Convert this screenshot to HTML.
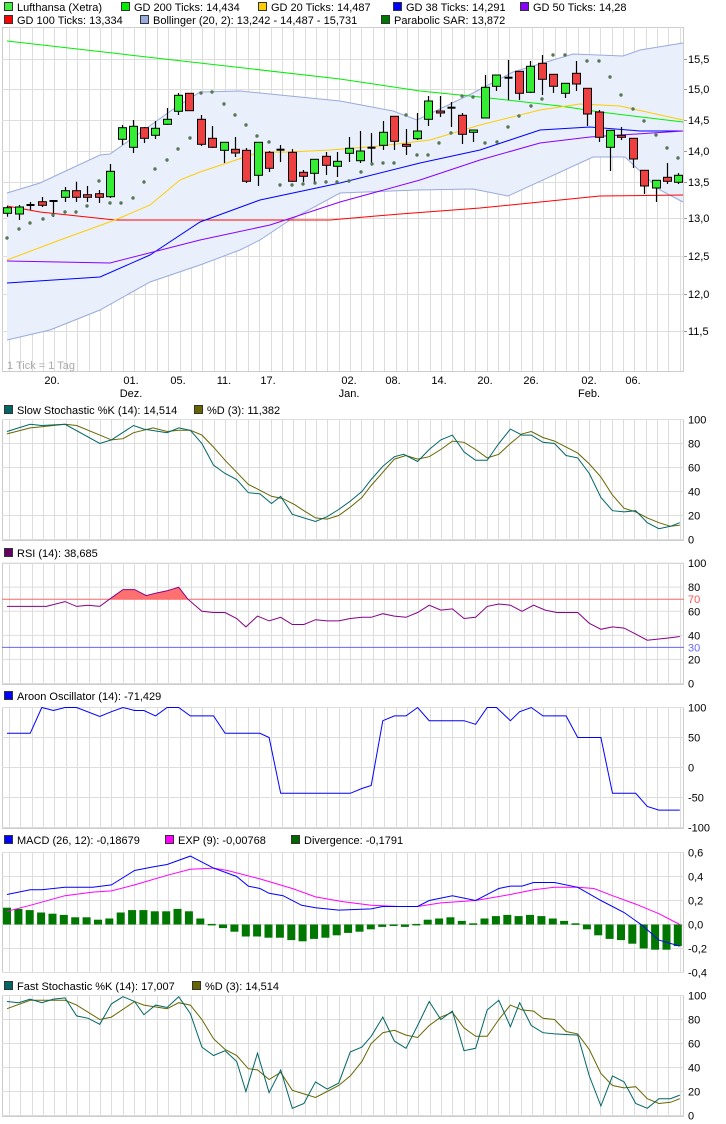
<!DOCTYPE html>
<html><head><meta charset="utf-8"><style>
body{margin:0;background:#fff;width:726px;height:1124px;overflow:hidden;font-family:"Liberation Sans",sans-serif}
svg{display:block}
text{font-family:"Liberation Sans",sans-serif;font-size:11px;fill:#000}
</style></head><body>
<svg id="s" width="726" height="1124" xmlns="http://www.w3.org/2000/svg"></svg>
<script>
var S=document.getElementById('s'),h='';
function L(x1,y1,x2,y2,c,w){h+='<line x1="'+x1+'" y1="'+y1+'" x2="'+x2+'" y2="'+y2+'" stroke="'+c+'" stroke-width="'+(w||1)+'"/>';}
function R(x,y,w,hh,f,s){h+='<rect x="'+x+'" y="'+y+'" width="'+w+'" height="'+hh+'" fill="'+f+'"'+(s?' stroke="'+s+'"':'')+'/>';}
function T(x,y,t,c,a){h+='<text x="'+x+'" y="'+y+'"'+(c?' style="fill:'+c+'"':'')+(a?' text-anchor="'+a+'"':'')+'>'+t+'</text>';}
function P(pts,c,w,fill){h+='<polyline points="'+pts.map(function(p){return p[0]+','+p[1]}).join(' ')+'" fill="'+(fill||'none')+'" stroke="'+c+'" stroke-width="'+(w||1)+'"/>';}
function leg(x,y,c,t){R(x+0.5,y-8.5,8,8,c,'#333');T(x+13,y,t);}
function frame(top,bot,hl){R(2.5,top+0.5,681,bot-top,'#fff','#ccc');
 for(var i=0;i<60;i++){var x=Math.round(9+11.37*i)+0.5;L(x,top,x,bot,'#ddd');}
 hl.forEach(function(y){L(2,y,684,y,'#ddd');});}
function Z(a,f){return a.map(function(p){return [(p[0]/2.155).toFixed(1),f(p[1]).toFixed(1)]});}
// legends
leg(4,11,'#44ee44','Lufthansa (Xetra)');leg(121,11,'#00ee00','GD 200 Ticks: 14,434');leg(258,11,'#ffcc00','GD 20 Ticks: 14,487');leg(393,11,'#0000ff','GD 38 Ticks: 14,291');leg(520,11,'#8800ff','GD 50 Ticks: 14,28');
leg(4,24,'#ff0000','GD 100 Ticks: 13,334');leg(140,24,'#99aadd','Bollinger (20, 2): 13,242 - 14,487 - 15,731');leg(381,24,'#007700','Parabolic SAR: 13,872');
// main
var gl=[59,89,120,151,182,218,256,294,331];
frame(27,371,gl.map(function(y){return y+0.5}));
var lab=['15,5','15,0','14,5','14,0','13,5','13,0','12,5','12,0','11,5'];
gl.forEach(function(y,i){T(688,y+4,lab[i]);L(684,y+.5,687,y+.5,'#999');});
var up=[[7,193],[40,183],[100,155],[110,154],[130,140],[172,110],[200,92],[240,91],[280,95],[340,101],[393,111],[417,120],[473,93],[513,72],[573,54],[623,56],[640,50],[683,43]];
var lo=[[683,202],[660,190],[625,157],[593,157],[508,196],[473,189],[417,190],[340,193],[290,220],[260,240],[240,250],[200,265],[150,282],[100,310],[50,330],[7,340]];
P(up.concat(lo),'none',1,'#e9f0fb');P(up,'#99aadd');P(lo,'#99aadd');
P([[7,41],[340,79],[420,91],[480,97],[560,106],[600,112],[683,122]],'#00ee00');
P([[7,206],[40,212],[115,220],[330,220],[400,214],[480,208],[560,200],[600,196],[683,195]],'#ff0000');
P([[7,283],[100,277],[150,255],[200,222],[260,200],[340,183],[420,163],[480,150],[540,130],[590,127],[640,131],[683,131]],'#0000ff');
P([[7,261],[110,263],[200,240],[270,225],[340,202],[420,180],[480,160],[540,143],[590,137],[683,131]],'#8800ff');
P([[7,260],[60,240],[115,220],[150,205],[180,180],[200,172],[230,162],[260,152],[290,152],[330,150],[380,146],[430,140],[480,125],[540,110],[580,104],[620,106],[683,120]],'#ffcc00');
var C=[[7,207.7,213.3,205.7,216.7,'g'],[19,207,214,205,220,'g'],[30,205,205,202,210,'d'],[42,201.7,205.3,197,207,'r'],[53,201,201,200,217,'d'],[65,190.7,197.3,187,202,'g'],[76,190.7,197.3,181.7,202,'r'],[87,194.7,197.3,186,202,'r'],[99,193.7,197.3,190,203,'r'],[110,171.3,196.7,164,198,'g'],[122,127.7,139.3,125,145,'g'],[133,126.3,147.3,120,153,'g'],[144,127.7,138.3,127,143,'r'],[155,128.3,135.3,121,139,'g'],[167,119.3,124.3,108,125,'g'],[178,95.3,111.3,93,115,'g'],[189,93.3,110.7,93,111,'r'],[201,119.3,144.3,115,146,'r'],[212,138.3,147.3,126,148,'r'],[224,142.3,150.3,142,163,'g'],[235,149.3,153,137,157,'r'],[246,150.3,181.3,148,183,'r'],[258,142.3,175.3,142,186,'g'],[269,152.3,168.3,151,172,'r'],[280,149.7,149.7,145,162,'d'],[292,152.3,181.3,149,182,'r'],[303,172.3,176.3,170,182,'r'],[314,159.3,173.3,159,182,'g'],[326,156.3,165.3,152,175,'r'],[337,161.3,166.3,152,177,'g'],[349,148.3,153.3,137,162,'g'],[360,151,160.7,131,163,'g'],[371,147.7,147.7,133,164,'d'],[383,132.3,145.3,121,150,'g'],[394,116.3,141.3,116,150,'r'],[406,144.3,146.3,129,155,'r'],[417,131,138.7,113,140,'g'],[428,101,119.3,96,126,'g'],[440,111,113,96,117,'r'],[451,107.7,107.7,102,127,'d'],[462,115.3,134.3,113,144,'r'],[473,130,132.3,130,142,'g'],[485,87.3,118,75,118,'g'],[496,75,86.3,75,91,'g'],[508,77.7,77.7,60,100,'d'],[519,71.3,93.3,71,100,'r'],[530,66.3,92.3,61,93,'g'],[542,63.3,79.3,55,95,'r'],[553,74.3,86.3,74,93,'r'],[565,83.3,93.3,83,98,'g'],[576,73.3,84,61,91,'r'],[587,88.3,114,88,126,'r'],[599,112,137.3,110,142,'r'],[610,130.3,147.3,130,171,'g'],[621,135.3,137.3,127,140,'r'],[633,138.3,159,138,168,'r'],[644,170.3,186,170,194,'r'],[656,180.3,188,180,202,'g'],[667,177.3,181.3,163,184,'r'],[678,175.3,182.3,173,184,'g']];
C.forEach(function(c){var x=c[0]+0.5;L(x,c[3],x,c[4],'#000',1.2);
 if(c[5]=='d'){L(x-4,c[1],x+4,c[1],'#000',2);}
 else R(c[0]-3.5,c[1],8,Math.max(c[2]-c[1],1.5),c[5]=='g'?'#33ee33':'#ee4040','#000');});
var sar=[[7,238],[19,229],[30,223],[43,219],[53,215],[65,212],[76,212],[87,206],[99,181],[110,203],[121,203],[133,198],[144,182],[155,169],[167,160],[178,149],[190,138],[201,93],[212,92],[224,104],[235,115],[246,125],[257,136],[269,142],[280,185],[292,185],[303,184],[315,183],[326,182],[337,182],[349,181],[361,172],[372,164],[383,163],[394,163],[406,115],[417,155],[428,155],[439,143],[451,133],[462,96],[473,97],[485,143],[497,142],[508,127],[519,116],[531,106],[542,99],[553,55],[565,55],[587,61],[599,61],[610,77],[621,95],[633,109],[644,121],[656,135],[667,148],[678,158]];
sar.forEach(function(p){h+='<circle cx="'+p[0]+'" cy="'+p[1]+'" r="1.7" fill="#557755"/>';});
T(7,369,'1 Tick = 1 Tag','#aaa');
[[52,'20.'],[131,'01.','Dez.'],[178,'05.'],[224,'11.'],[268,'17.'],[349,'02.','Jan.'],[393,'08.'],[439,'14.'],[485,'20.'],[531,'26.'],[589,'02.','Feb.'],[633,'06.']].forEach(function(a){T(a[0],384,a[1],null,'middle');if(a[2])T(a[0],397,a[2],null,'middle');});
// slow stoch
leg(4,414,'#006666','Slow Stochastic %K (14): 14,514');leg(194,414,'#666600','%D (3): 11,382');
var y2=function(v){return 539.5-v*1.2};
frame(419,540,[0,20,40,60,80,100].map(function(v){return y2(v)}));
[0,20,40,60,80,100].forEach(function(v){T(688,y2(v)+4,''+v);});
var sk=[[15,90],[65,96],[90,95],[140,96],[215,80],[240,83],[288,95],[310,92],[360,89],[385,93],[410,91],[435,80],[460,62],[485,55],[510,50],[535,39],[560,38],[585,30],[605,36],[630,21],[680,15],[705,19],[730,25],[755,32],[780,40],[800,50],[825,61],[850,69],[870,71],[900,65],[925,75],[950,83],[975,87],[1000,73],[1025,66],[1050,66],[1075,80],[1100,92],[1125,87],[1145,87],[1170,81],[1195,80],[1220,70],[1245,68],[1270,55],[1295,35],[1320,24],[1345,23],[1370,24],[1395,14],[1420,9],[1445,11],[1465,14]];
var sd=[[15,88],[65,93],[90,94],[140,96],[165,95],[215,87],[240,83],[265,84],[288,89],[330,93],[360,90],[385,91],[410,91],[435,87],[460,77],[485,66],[510,56],[535,46],[560,41],[585,36],[610,34],[635,29],[655,24],[680,18],[705,17],[730,20],[755,27],[780,35],[800,45],[825,56],[850,67],[875,70],[900,67],[925,69],[950,75],[975,82],[1000,81],[1025,75],[1050,68],[1075,71],[1100,80],[1125,88],[1145,90],[1170,85],[1195,82],[1220,77],[1245,72],[1270,63],[1295,52],[1320,37],[1345,26],[1370,23],[1395,18],[1420,14],[1445,11],[1465,12]];
P(Z(sd,y2),'#666600');P(Z(sk,y2),'#006666');
// RSI
leg(4,557,'#660066','RSI (14): 38,685');
var y3=function(v){return 683.5-v*1.204};
frame(563,684,[0,20,40,60,80,100].map(function(v){return y3(v)}));
[0,20,40,60,80,100].forEach(function(v){T(688,y3(v)+4,''+v);});
T(688,y3(70)+4,'70','#ff5555');T(688,y3(30)+4,'30','#6666ff');
var rs=[[15,64],[100,64],[140,68],[165,64],[190,65],[215,64],[236,70],[265,78],[290,78],[315,73],[335,75],[360,77],[385,80],[405,70],[435,60],[460,59],[485,59],[510,54],[530,47],[555,56],[580,52],[605,55],[630,49],[655,49],[680,53],[705,52],[730,52],[755,54],[780,55],[800,55],[825,58],[850,56],[875,55],[900,59],[925,65],[950,61],[975,62],[1000,54],[1025,55],[1050,64],[1075,66],[1100,65],[1125,60],[1150,65],[1175,61],[1200,59],[1245,59],[1270,50],[1295,45],[1320,47],[1345,46],[1370,41],[1395,36],[1420,37],[1445,38],[1465,39]];
P(Z([[236,70],[265,78],[290,78],[315,73],[335,75],[360,77],[385,80],[405,70]],y3),'none',1,'#ff7070');
L(2,y3(70),684,y3(70),'#ff6666');L(2,y3(30),684,y3(30),'#6666ff');
P(Z(rs,y3),'#880088');
// Aroon
leg(4,700,'#0000ff','Aroon Oscillator (14): -71,429');
var y4=function(v){return 767.5-v*0.6};
frame(707,828,[-100,-50,0,50,100].map(function(v){return y4(v)}));
[[-100,'-100'],[-50,'-50'],[0,'0'],[50,'50'],[100,'100']].forEach(function(a){T(688,y4(a[0])+4,a[1]);});
var ar=[[15,57],[65,57],[90,100],[115,95],[140,100],[165,100],[215,85],[240,93],[265,100],[290,95],[310,95],[335,86],[360,100],[385,100],[410,86],[460,86],[485,57],[560,57],[580,50],[605,-43],[755,-43],[780,-35],[800,-30],[825,78],[850,86],[875,86],[900,100],[925,78],[1000,78],[1025,72],[1050,100],[1070,100],[1100,78],[1120,93],[1145,100],[1170,86],[1220,86],[1245,50],[1295,50],[1320,-43],[1370,-43],[1395,-65],[1420,-71],[1465,-71]];
P(Z(ar,y4),'#0000ff');
// MACD
leg(4,844,'#0000ff','MACD (26, 12): -0,18679');leg(165,844,'#ff00ff','EXP (9): -0,00768');leg(291,844,'#006600','Divergence: -0,1791');
var y5=function(v){return 924.5-v*120};
frame(852,972,[-0.4,-0.2,0,0.2,0.4,0.6].map(function(v){return y5(v)}));
[[-0.4,'-0,4'],[-0.2,'-0,2'],[0,'0,0'],[0.2,'0,2'],[0.4,'0,4'],[0.6,'0,6']].forEach(function(a){T(688,y5(a[0])+4,a[1]);});
var dv=[.14,.13,.12,.10,.09,.08,.06,.06,.04,.05,.10,.12,.12,.11,.11,.13,.11,.05,.005,-.03,-.06,-.10,-.10,-.11,-.11,-.13,-.14,-.12,-.11,-.09,-.07,-.06,-.04,-.02,-.01,-.02,.005,.04,.05,.06,.03,.01,.05,.07,.08,.07,.08,.07,.05,.03,.01,-.04,-.09,-.12,-.13,-.16,-.20,-.21,-.21,-.18];
dv.forEach(function(v,i){var x=7+11.37*i;var a=y5(0),b=y5(v);R((x-4).toFixed(1),Math.min(a,b).toFixed(1),8,Math.max(Math.abs(b-a),1.5).toFixed(1),'#007700');});
var md=[[15,.25],[65,.29],[90,.29],[140,.31],[200,.31],[240,.33],[290,.45],[330,.48],[360,.50],[410,.57],[460,.47],[510,.40],[535,.32],[560,.30],[580,.26],[610,.24],[650,.16],[680,.14],[730,.12],[800,.13],[825,.15],[900,.15],[925,.20],[975,.24],[1025,.20],[1075,.30],[1100,.32],[1125,.32],[1150,.35],[1195,.35],[1245,.31],[1295,.20],[1345,.10],[1385,-.01],[1420,-.13],[1465,-.18]];
var ex=[[15,.11],[65,.16],[140,.24],[200,.27],[240,.28],[290,.33],[360,.41],[410,.46],[460,.47],[490,.45],[560,.38],[630,.30],[680,.23],[740,.19],[800,.16],[860,.15],[900,.15],[950,.18],[1025,.20],[1100,.25],[1150,.29],[1195,.31],[1245,.31],[1280,.30],[1320,.24],[1370,.17],[1420,.09],[1465,0]];
P(Z(ex,y5),'#ff00ff');P(Z(md,y5),'#0000ff');
// Fast stoch
leg(4,990,'#006666','Fast Stochastic %K (14): 17,007');leg(192,990,'#666600','%D (3): 14,514');
var y6=function(v){return 1115.5-v*1.2};
frame(995,1116,[0,20,40,60,80,100].map(function(v){return y6(v)}));
[0,20,40,60,80,100].forEach(function(v){T(688,y6(v)+4,''+v);});
var fk=[[15,95],[40,94],[65,97],[90,94],[115,97],[140,98],[165,83],[190,81],[215,76],[240,93],[265,99],[290,95],[310,84],[335,92],[360,90],[385,99],[410,85],[435,57],[460,50],[485,54],[510,45],[530,20],[555,52],[580,19],[605,38],[630,6],[655,10],[680,28],[705,22],[730,27],[755,53],[780,57],[800,66],[825,82],[850,62],[875,56],[900,75],[925,95],[950,80],[975,87],[1000,54],[1025,56],[1050,88],[1075,96],[1100,74],[1120,94],[1145,75],[1170,69],[1195,68],[1245,67],[1270,33],[1295,8],[1320,33],[1345,28],[1370,10],[1395,6],[1420,14],[1445,14],[1465,17]];
var fd=[[15,89],[65,96],[140,96],[165,92],[215,80],[240,82],[290,95],[310,92],[360,89],[385,94],[410,92],[435,80],[460,64],[485,55],[510,50],[535,39],[555,38],[580,30],[605,36],[630,21],[655,18],[680,15],[705,20],[730,25],[755,33],[780,45],[800,60],[825,69],[850,71],[875,67],[900,65],[925,75],[950,82],[975,86],[1000,73],[1025,66],[1050,66],[1075,80],[1100,92],[1125,88],[1150,87],[1170,81],[1195,80],[1220,70],[1245,68],[1270,55],[1295,35],[1320,25],[1345,23],[1370,24],[1395,14],[1420,10],[1445,11],[1465,14]];
P(Z(fd,y6),'#666600');P(Z(fk,y6),'#006666');
S.innerHTML=h;
</script>
</body></html>
